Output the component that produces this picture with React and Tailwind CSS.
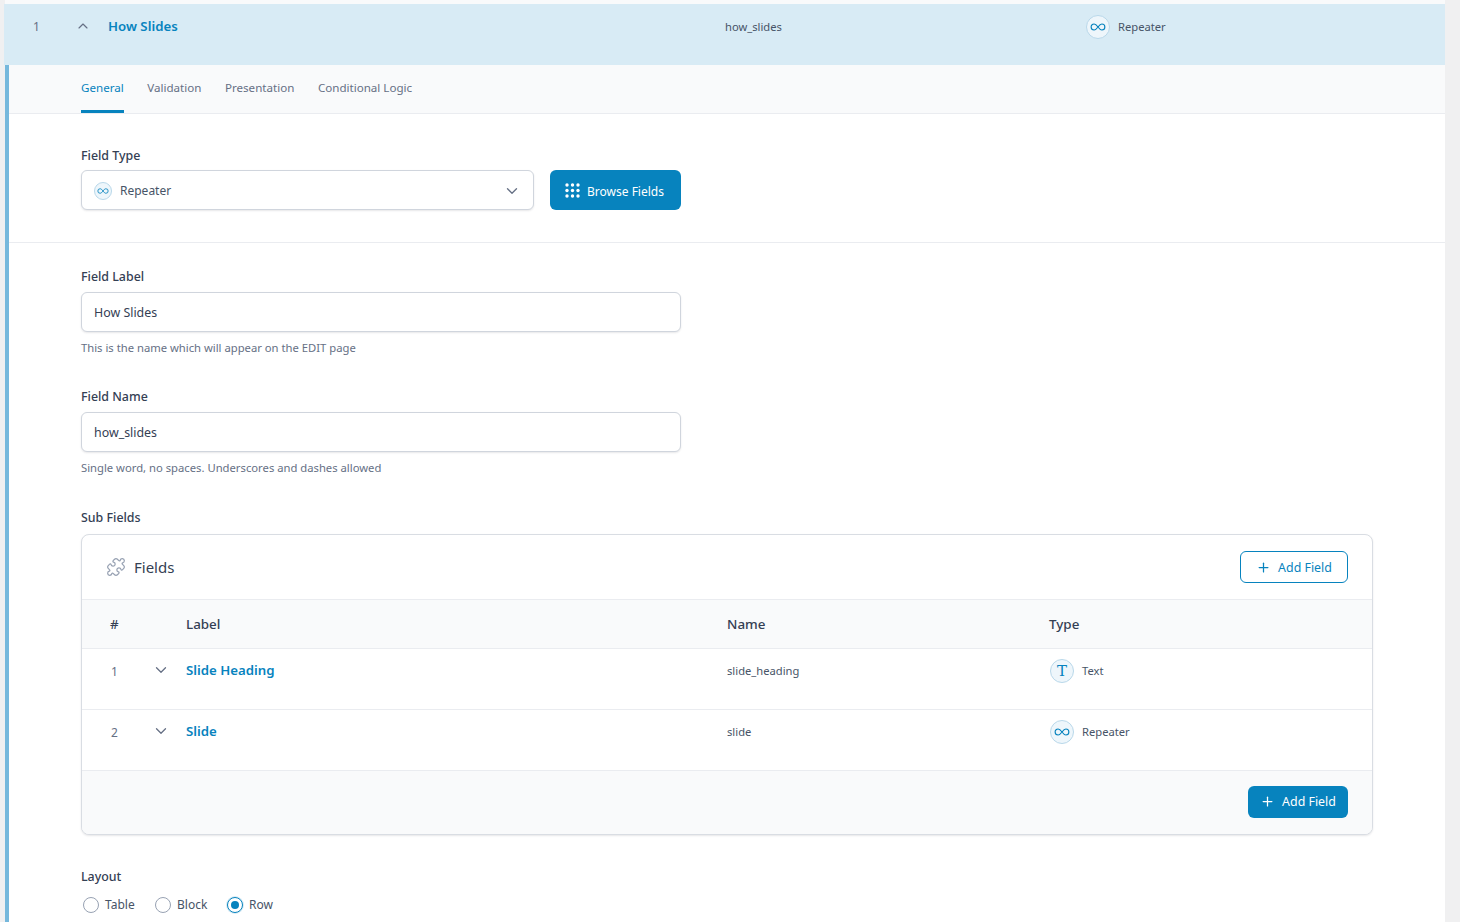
import React from "react";
import { ChevronUp, ChevronDown, Plus, Puzzle } from "lucide-react";

const Infinity8 = ({ className }) => (
    <svg viewBox="0 0 24 24" fill="none" stroke="currentColor" strokeWidth="1.7" className={className}>
        <path d="M12 12c-2-2.7-3.6-4.500-5.800-4.500a4.500 4.500 0 0 0 0 9c2.200 0 3.800-1.800 5.800-4.500zm0 0c2 2.700 3.600 4.500 5.800 4.500a4.500 4.500 0 0 0 0-9c-2.200 0-3.800 1.800-5.800 4.500z" />
    </svg>
);

const TypeBadge = ({ children, size = "w-6 h-6", bg = "bg-[#eef6fb]" }) => (
    <span className={`${size} ${bg} rounded-full border border-[#b9d8ea] flex items-center justify-center text-[#0783be] shrink-0`}>
        {children}
    </span>
);

const Grid9 = () => (
    <svg viewBox="0 0 15 15" fill="#fff" className="w-[15px] h-[15px]">
        {[2, 7.5, 13].map((y) =>
            [2, 7.5, 13].map((x) => <circle key={`${x}-${y}`} cx={x} cy={y} r="1.700" />)
        )}
    </svg>
);

const Label = ({ children }) => (
    <div className="h-5 pt-[1px] text-[12.4px] leading-5 font-medium text-[#344054]">{children}</div>
);

const TextField = ({ label, value, hint }) => (
    <div>
        <Label>{label}</Label>
        <div className="mt-[6px] w-[600px] h-10 px-3 pt-[2px] flex items-center bg-white border border-[#d0d5dd] rounded-md shadow-[0_1px_2px_rgba(16,24,40,0.1)] text-[12.4px] text-[#344054]">
            {value}
        </div>
        <div className="mt-[6px] text-[11.25px] leading-5 text-[#667085]">{hint}</div>
    </div>
);

const Radio = ({ label, checked, className }) => (
    <div className={`flex items-center gap-[6px] ${className}`}>
        <span className={`w-4 h-4 rounded-full bg-white border flex items-center justify-center ${checked ? "border-[#0783be] shadow-[0_0_0_1px_#d8ebf5]" : "border-[#98a2b3]"}`}>
            {checked && <span className="w-2 h-2 rounded-full bg-[#0783be]" />}
        </span>
        <span className="text-xs leading-5 text-[#475467]">{label}</span>
    </div>
);

const SubRow = ({ num, label, name, type, icon }) => (
    <div className="h-[61px] flex border-b border-[#eaecf0] text-[11.2px] text-[#475467]">
        <div className="w-[66px] pl-[29px] pt-[13px] text-xs text-[#667085] leading-5">{num}</div>
        <div className="w-[38px] pt-[12px] text-[#667085]">
            <ChevronDown className="w-[18px] h-[18px] ml-[4px]" strokeWidth={1.75} />
        </div>
        <div className="w-[541px] pt-[11px] text-[13.25px] leading-5 font-semibold text-[#0783be]">{label}</div>
        <div className="w-[323px] pt-[12px] leading-5">{name}</div>
        <div className="flex items-start gap-2 pt-[10px] leading-6">
            {icon}
            <span>{type}</span>
        </div>
    </div>
);

export default function App() {
    return (
        <div className="w-[1460px] h-[922px] overflow-hidden flex bg-[#f0f0f1] font-['Noto_Sans','Open_Sans',sans-serif]">
            <div className="w-[1445px] h-full flex flex-col">
                <div className="h-1 ml-[5px] bg-[#f9fafb]" />
                <div className="h-[61px] ml-[4px] flex bg-[#d8ebf5] text-[11.2px] text-[#475467]">
                    <div className="w-[55px] pl-[29px] pt-[13px] text-[#667085] leading-5">
                        <span className="text-xs">1</span>
                    </div>
                    <div className="w-[49px] pl-[16px] pt-[14px] text-[#667085]">
                        <ChevronUp className="w-4 h-4" strokeWidth={1.75} />
                    </div>
                    <div className="w-[617px] pt-[12px] text-[13.25px] leading-5 font-semibold text-[#0783be]">How Slides</div>
                    <div className="w-[361px] pt-[13px] leading-5">how_slides</div>
                    <div className="flex items-start gap-2 pt-[11px] leading-6">
                        <TypeBadge>
                            <Infinity8 className="w-4 h-4" />
                        </TypeBadge>
                        <span>Repeater</span>
                    </div>
                </div>

                <div className="flex-1 ml-[5px] border-l-4 border-[#76b8dc] bg-white">
                    <div className="h-[49px] pl-[72px] flex gap-[23.5px] bg-[#f9fafb] border-b border-[#eaecf0] text-[11.6px]">
                        <div className="h-[48px] pt-[13px] leading-5 text-[#0783be] border-b-[3px] border-[#0783be]">General</div>
                        <div className="pt-[13px] leading-5 text-[#667085]">Validation</div>
                        <div className="pt-[13px] leading-5 text-[#667085]">Presentation</div>
                        <div className="pt-[13px] leading-5 text-[#667085]">Conditional Logic</div>
                    </div>

                    <div className="h-[129px] pl-[72px] pt-[31px] border-b border-[#eaecf0]">
                        <Label>Field Type</Label>
                        <div className="mt-[5px] flex gap-4">
                            <div className="w-[453px] h-10 pl-3 pr-3 pt-[1px] flex items-center gap-2 bg-white border border-[#d0d5dd] rounded-md shadow-[0_1px_2px_rgba(16,24,40,0.1)]">
                                <TypeBadge size="w-[18px] h-[18px]">
                                    <Infinity8 className="w-3 h-3" />
                                </TypeBadge>
                                <span className="flex-1 text-xs text-[#475467]">Repeater</span>
                                <ChevronDown className="w-[18px] h-[18px] text-[#667085]" strokeWidth={1.75} />
                            </div>
                            <div className="w-[131px] h-10 pr-[2px] flex items-center justify-center gap-[7px] rounded-md bg-[#0783be] text-white text-xs">
                                <Grid9 />
                                <span className="pt-[4px]">Browse Fields</span>
                            </div>
                        </div>
                    </div>

                    <div className="pl-[72px] pt-[23px]">
                        <TextField label="Field Label" value="How Slides" hint="This is the name which will appear on the EDIT page" />
                        <div className="mt-[28px]">
                            <TextField label="Field Name" value="how_slides" hint="Single word, no spaces. Underscores and dashes allowed" />
                        </div>

                        <div className="mt-[29px]">
                            <Label>Sub Fields</Label>
                        </div>
                        <div className="mt-[7px] w-[1292px] h-[301px] bg-white border border-[#d9dde3] rounded-lg shadow-[0_1px_2px_rgba(16,24,40,0.1)] overflow-hidden">
                            <div className="h-[65px] pl-6 pr-6 flex items-center border-b border-[#eaecf0]">
                                <Puzzle className="w-5 h-5 text-[#98a2b3]" strokeWidth={1.5} />
                                <span className="ml-2 text-[15px] text-[#344054]">Fields</span>
                                <div className="ml-auto w-[108px] h-8 flex items-center justify-center gap-[7px] bg-white border border-[#0783be] rounded-md text-[12.4px] text-[#0783be]">
                                    <Plus className="w-[15px] h-[15px]" strokeWidth={2} />
                                    <span className="pt-[2px]">Add Field</span>
                                </div>
                            </div>
                            <div className="h-[49px] pt-[1px] flex items-center bg-[#f9fafb] border-b border-[#eaecf0] text-[13.4px] font-medium text-[#344054]">
                                <div className="w-[104px] pl-[28px]">#</div>
                                <div className="w-[541px]">Label</div>
                                <div className="w-[322px]">Name</div>
                                <div>Type</div>
                            </div>
                            <SubRow
                                num="1"
                                label="Slide Heading"
                                name="slide_heading"
                                type="Text"
                                icon={
                                    <TypeBadge>
                                        <span className="font-['DejaVu_Serif',serif] text-[15px] leading-none">T</span>
                                    </TypeBadge>
                                }
                            />
                            <SubRow
                                num="2"
                                label="Slide"
                                name="slide"
                                type="Repeater"
                                icon={
                                    <TypeBadge>
                                        <Infinity8 className="w-4 h-4" />
                                    </TypeBadge>
                                }
                            />
                            <div className="h-[63px] pr-6 pb-[2px] flex items-center justify-end bg-[#f9fafb]">
                                <div className="w-[100px] h-8 flex items-center justify-center gap-[7px] rounded-md bg-[#0783be] text-white text-[12.4px]">
                                    <Plus className="w-[15px] h-[15px]" strokeWidth={2} />
                                    <span className="pt-[2px]">Add Field</span>
                                </div>
                            </div>
                        </div>

                        <div className="mt-[31px]">
                            <Label>Layout</Label>
                        </div>
                        <div className="mt-[9px] flex pl-[2px]">
                            <Radio label="Table" className="w-[72px]" />
                            <Radio label="Block" className="w-[72px]" />
                            <Radio label="Row" checked />
                        </div>
                    </div>
                </div>
            </div>
            <div className="w-[15px]" />
        </div>
    );
}
